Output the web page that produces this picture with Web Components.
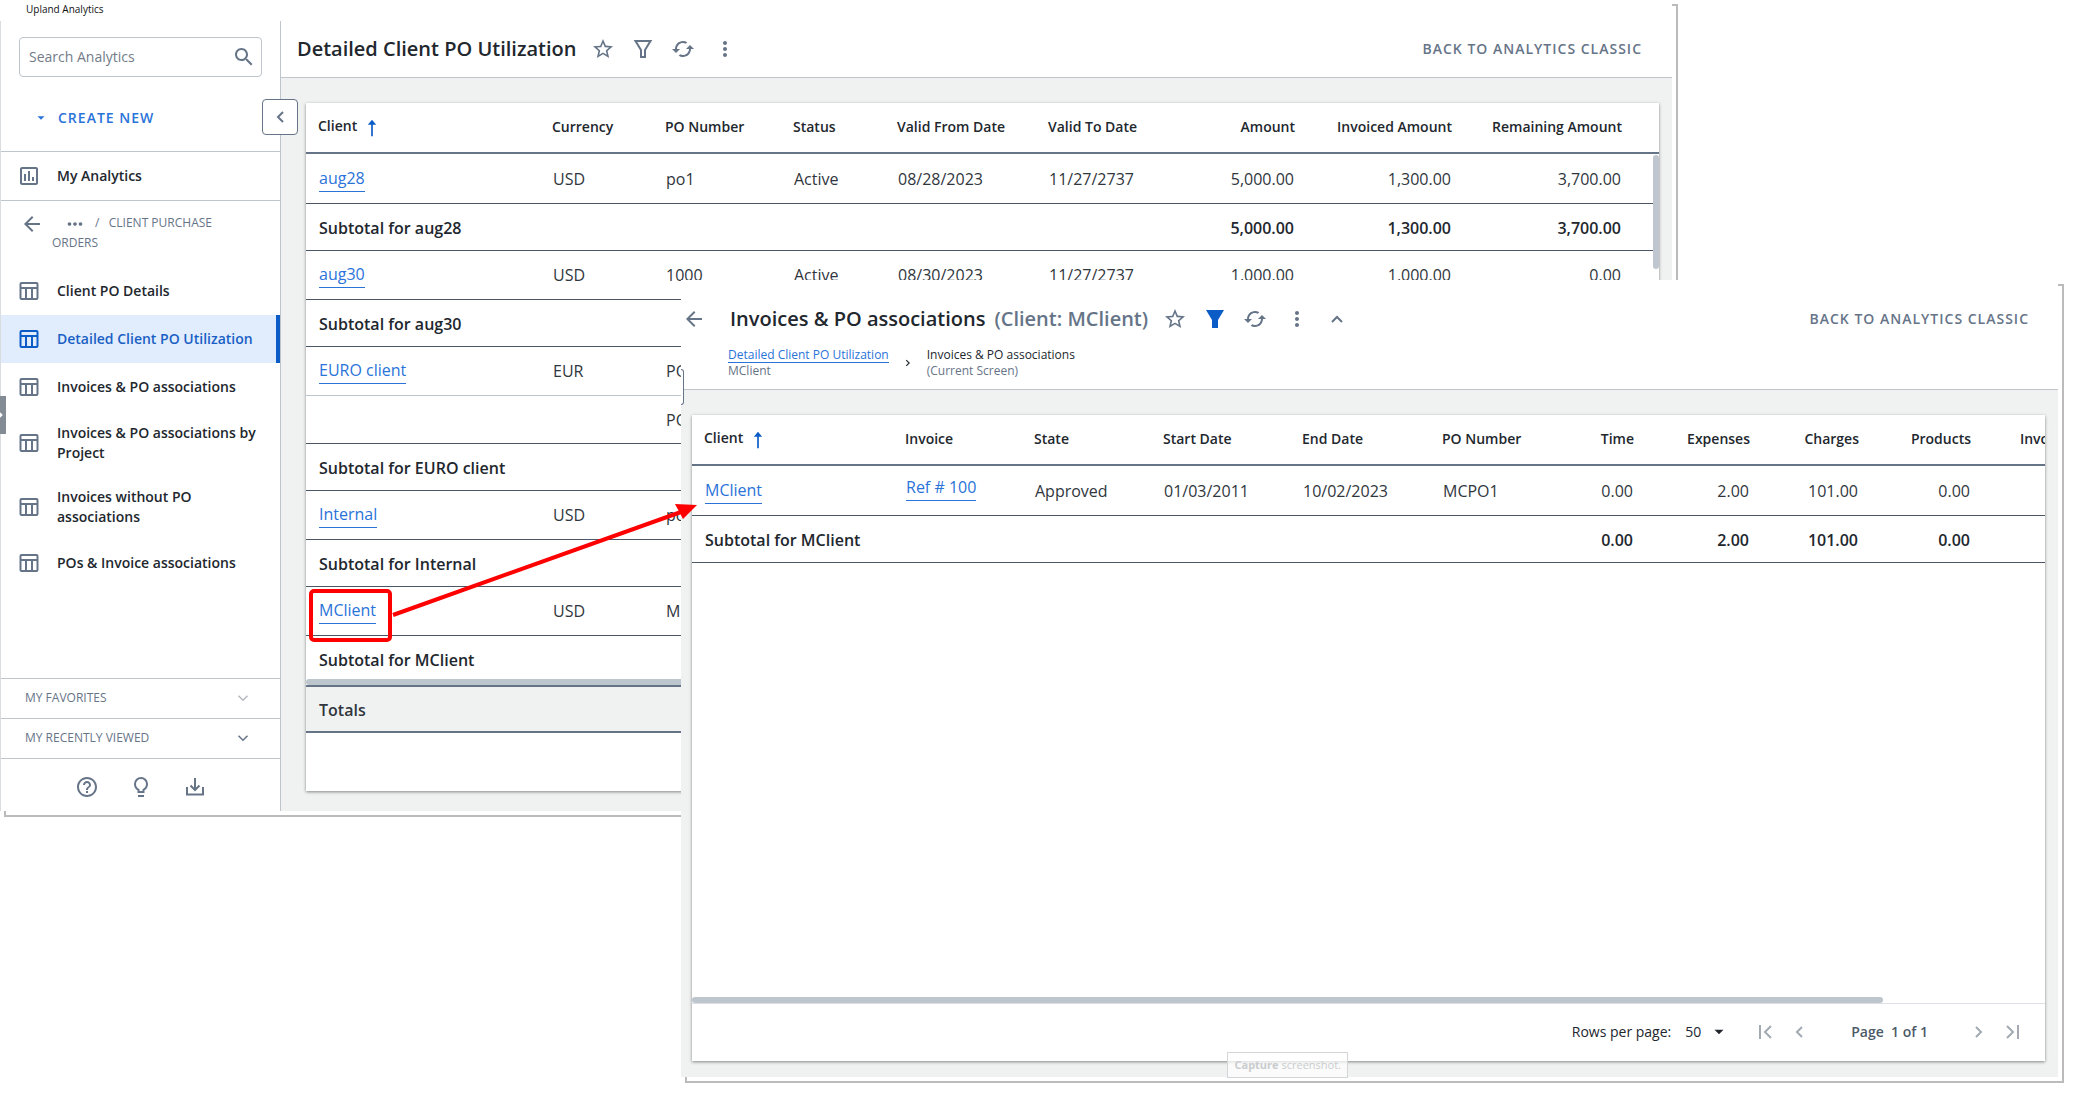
<!DOCTYPE html>
<html lang="en">
<head>
<meta charset="utf-8">
<title>Upland Analytics</title>
<style>
    html, body {
        margin: 0;
        height: 100%;
    }
    body {
        position: relative;
        min-height: 800px;
        overflow: hidden;
        background: #fff;
        color: #22272e;
        font-family: "Open Sans", sans-serif;
        font-size: 14px;
        line-height: 20px;
        --line: #bfc5cd;
        --slate: #667488;
        --blue: #2a73d9;
        --deep-blue: #0b5cc7;
        --canvas: #f0f2f2;
    }
    /* the two windows sit freely on the desktop */
    app-window {
        position: absolute;
    }
    .back {
        inset: 0 397px 277px 0;
    }
    .front {
        inset: 280px 11px 11px 681px;
    }
    .main {
        flex: 1;
        min-width: 0;
        display: flex;
        flex-direction: column;
    }
    callout-arrow {
        position: absolute;
        left: 309px;
        top: 500px;
    }
    hint-box {
        position: absolute;
        right: 727px;
        bottom: 16px;
    }
</style>
</head>
<body>
    <app-window class="back" caption="Upland Analytics">
        <side-nav>
            <nav-item icon="chart" slot="home">My Analytics</nav-item>
            <nav-item icon="table">Client PO Details</nav-item>
            <nav-item icon="table" active>Detailed Client PO Utilization</nav-item>
            <nav-item icon="table">Invoices &amp; PO associations</nav-item>
            <nav-item icon="table">Invoices &amp; PO associations by Project</nav-item>
            <nav-item icon="table">Invoices without PO associations</nav-item>
            <nav-item icon="table">POs &amp; Invoice associations</nav-item>
        </side-nav>
        <div class="main">
            <view-header icons="star,filter,refresh,more">Detailed Client PO Utilization</view-header>
            <data-grid view="utilization"></data-grid>
        </div>
    </app-window>

    <app-window class="front">
        <div class="main">
            <view-header back icons="star,filterFull,refresh,more,up">
                Invoices &amp; PO associations
                <span slot="sub">(Client: MClient)</span>
                <bread-crumbs slot="crumbs"></bread-crumbs>
            </view-header>
            <data-grid view="invoices" paged></data-grid>
        </div>
        <edge-handle slot="edge"></edge-handle>
    </app-window>

    <hint-box><b>Capture</b> screenshot.</hint-box>
    <callout-arrow></callout-arrow>

<script>
const ICONS = {
    star: '<path d="M22 9.24l-7.19-.62L12 2 9.19 8.63 2 9.24l5.46 4.73L5.82 21 12 17.27 18.18 21l-1.63-7.03L22 9.24zM12 15.4l-3.76 2.27 1-4.28-3.32-2.88 4.38-.38L12 6.1l1.71 4.04 4.38.38-3.32 2.88 1 4.28L12 15.4z"/>',
    filter: '<path d="M4.500 4h15L14 13v7h-4v-7z" fill="none" stroke="currentColor" stroke-width="2"/>',
    filterFull: '<path d="M3 3h18l-6 10v8H9v-8z"/>',
    refresh: '<path d="M19 8l-4 4h3c0 3.310-2.690 6-6 6-1.010 0-1.970-.25-2.800-.7l-1.460 1.460C8.970 19.540 10.430 20 12 20c4.420 0 8-3.580 8-8h3l-4-4zM6 12c0-3.310 2.690-6 6-6 1.010 0 1.970.25 2.800.7l1.460-1.460C15.030 4.460 13.570 4 12 4c-4.420 0-8 3.580-8 8H1l4 4 4-4H6z"/>',
    more: '<path d="M12 8c1.100 0 2-.9 2-2s-.9-2-2-2-2 .9-2 2 .9 2 2 2zm0 2c-1.100 0-2 .9-2 2s.9 2 2 2 2-.9 2-2-.9-2-2-2zm0 6c-1.100 0-2 .9-2 2s.9 2 2 2 2-.9 2-2-.9-2-2-2z"/>',
    dots: '<path d="M6 10c-1.100 0-2 .9-2 2s.9 2 2 2 2-.9 2-2-.9-2-2-2zm12 0c-1.100 0-2 .9-2 2s.9 2 2 2 2-.9 2-2-.9-2-2-2zm-6 0c-1.100 0-2 .9-2 2s.9 2 2 2 2-.9 2-2-.9-2-2-2z"/>',
    arrowLeft: '<path d="M20 11H7.830l5.590-5.590L12 4l-8 8 8 8 1.410-1.410L7.830 13H20v-2z"/>',
    search: '<path d="M15.500 14h-.79l-.28-.27C15.410 12.590 16 11.110 16 9.500 16 5.910 13.090 3 9.500 3S3 5.910 3 9.500 5.910 16 9.500 16c1.610 0 3.090-.59 4.230-1.570l.27.28v.79l5 4.990L20.490 19l-4.990-5zm-6 0C7.010 14 5 11.990 5 9.500S7.010 5 9.500 5 14 7.010 14 9.500 11.990 14 9.500 14z"/>',
    chart: '<path d="M9 17H7v-7h2v7zm4 0h-2V7h2v10zm4 0h-2v-4h2v4zm2 2H5V5h14v14zm0-16H5c-1.100 0-2 .9-2 2v14c0 1.100.9 2 2 2h14c1.100 0 2-.9 2-2V5c0-1.100-.9-2-2-2z"/>',
    table: '<g fill="none" stroke="currentColor" stroke-width="2"><rect x="3.500" y="4" width="17" height="16" rx="1"/><path d="M3 9h18M9 9v11M15 9v11"/></g>',
    help: '<path d="M11 18h2v-2h-2v2zm1-16C6.480 2 2 6.480 2 12s4.480 10 10 10 10-4.480 10-10S17.520 2 12 2zm0 18c-4.410 0-8-3.590-8-8s3.590-8 8-8 8 3.590 8 8-3.590 8-8 8zm0-14c-2.210 0-4 1.790-4 4h2c0-1.100.9-2 2-2s2 .9 2 2c0 2-3 1.750-3 5h2c0-2.250 3-2.500 3-5 0-2.210-1.790-4-4-4z"/>',
    bulb: '<path d="M9 20h6v2H9z"/><path d="M9.500 17v-2.200C7.300 13.600 6 11.500 6 9a6 6 0 0 1 12 0c0 2.500-1.300 4.600-3.500 5.800V17z" fill="none" stroke="currentColor" stroke-width="2"/>',
    download: '<path d="M12 3v12M7.500 10.500L12 15l4.500-4.500M4 12v7.500h16V12" fill="none" stroke="currentColor" stroke-width="2"/>',
    left: '<path d="M15 7l-5 5 5 5" fill="none" stroke="currentColor" stroke-width="2"/>',
    right: '<path d="M9 7l5 5-5 5" fill="none" stroke="currentColor" stroke-width="2"/>',
    first: '<path d="M18 6l-6 6 6 6M7 5v14" fill="none" stroke="currentColor" stroke-width="2"/>',
    last: '<path d="M6 6l6 6-6 6M17 5v14" fill="none" stroke="currentColor" stroke-width="2"/>',
    up: '<path d="M7 15l5-5 5 5" fill="none" stroke="currentColor" stroke-width="2"/>',
    down: '<path d="M6 9l6 6 6-6" fill="none" stroke="currentColor" stroke-width="2"/>',
    caret: '<path d="M6 9h12l-6 6z"/>',
    sort: '<path d="M12 2l5 6h-4v14h-2V8H7z"/>'
};

const svg = (name, size = 24) =>
    `<svg width="${size}" height="${size}" viewBox="0 0 24 24" fill="currentColor" aria-hidden="true">${ICONS[name]}</svg>`;

const RESET = `
    svg { display: block; flex: none; }
    button {
        display: flex;
        align-items: center;
        margin: 0;
        padding: 0;
        border: 0;
        background: none;
        color: inherit;
        font: inherit;
        cursor: pointer;
    }
`;

// link cells start with "@"
const VIEWS = {
    utilization: {
        columns: [
            ['Client', 234], ['Currency', 113], ['PO Number', 128], ['Status', 104],
            ['Valid From Date', 151], ['Valid To Date', 121], ['Amount', 150, 'num'],
            ['Invoiced Amount', 157, 'num'], ['Remaining Amount', 170, 'num'], ['']
        ],
        rows: [
            ['@aug28', 'USD', 'po1', 'Active', '08/28/2023', '11/27/2737', '5,000.00', '1,300.00', '3,700.00', ''],
            ['Subtotal for aug28', '', '', '', '', '', '5,000.00', '1,300.00', '3,700.00', ''],
            ['@aug30', 'USD', '1000', 'Active', '08/30/2023', '11/27/2737', '1,000.00', '1,000.00', '0.00', ''],
            ['Subtotal for aug30', '', '', '', '', '', '', '', '', ''],
            ['@EURO client', 'EUR', 'PO', '', '', '', '', '', '', ''],
            ['', '', 'PO', '', '', '', '', '', '', ''],
            ['Subtotal for EURO client', '', '', '', '', '', '', '', '', ''],
            ['@Internal', 'USD', 'po', '', '', '', '', '', '', ''],
            ['Subtotal for Internal', '', '', '', '', '', '', '', '', ''],
            ['@MClient', 'USD', 'M', '', '', '', '', '', '', ''],
            ['Subtotal for MClient', '', '', '', '', '', '', '', '', '']
        ],
        totals: true
    },
    invoices: {
        columns: [
            ['Client', 201], ['Invoice', 129], ['State', 129], ['Start Date', 139], ['End Date', 140],
            ['PO Number', 130], ['Time', 86, 'num'], ['Expenses', 116, 'num'], ['Charges', 109, 'num'],
            ['Products', 112, 'num'], ['Invoice', 97, 'num']
        ],
        rows: [
            ['@MClient', '@Ref # 100', 'Approved', '01/03/2011', '10/02/2023', 'MCPO1', '0.00', '2.00', '101.00', '0.00', ''],
            ['Subtotal for MClient', '', '', '', '', '', '0.00', '2.00', '101.00', '0.00', '']
        ]
    }
};

class AppWindow extends HTMLElement {
    constructor() {
        super();
        this.attachShadow({ mode: 'open' });
        const caption = this.getAttribute('caption');
        this.shadowRoot.innerHTML = `
            <style>
                :host { display: block; }
                /* drop edge, seen only past the sheet */
                .edge {
                    position: absolute;
                    inset: 4px 0 0 4px;
                    border: 2px solid #bbb;
                }
                .sheet {
                    position: absolute;
                    inset: 0 6px 6px 0;
                    display: flex;
                    flex-direction: column;
                    background: #fff;
                }
                .caption {
                    height: 21px;
                    padding-left: 26px;
                    font-size: 10px;
                    line-height: 19px;
                    color: #111;
                }
                .body {
                    flex: 1;
                    min-height: 0;
                    display: flex;
                }
            </style>
            <div class="edge"></div>
            <div class="sheet">
                ${caption ? `<div class="caption">${caption}</div>` : ''}
                <div class="body"><slot></slot></div>
            </div>
            <slot name="edge"></slot>
        `;
    }
}

class NavItem extends HTMLElement {
    constructor() {
        super();
        this.attachShadow({ mode: 'open' });
        this.shadowRoot.innerHTML = `
            <style>
                ${RESET}
                :host { display: block; }
                a {
                    display: flex;
                    align-items: center;
                    gap: 16px;
                    box-sizing: border-box;
                    min-height: 48px;
                    padding: 12px 16px;
                    color: #22272e;
                    font-weight: 600;
                    text-decoration: none;
                }
                svg { color: var(--slate); }
                :host([active]) a {
                    background: #e1edfd;
                    box-shadow: inset -4px 0 var(--deep-blue);
                    color: #1a5fc4;
                }
                :host([active]) svg { color: var(--deep-blue); }
            </style>
            <a href="#">${svg(this.getAttribute('icon'))}<span><slot></slot></span></a>
        `;
    }
}

class SideNav extends HTMLElement {
    constructor() {
        super();
        this.attachShadow({ mode: 'open' });
        this.shadowRoot.innerHTML = `
            <style>
                ${RESET}
                :host {
                    position: relative;
                    z-index: 1;
                    box-sizing: border-box;
                    width: 281px;
                    display: flex;
                    flex-direction: column;
                    border-left: 1px solid #dadddf;
                    border-right: 1px solid var(--line);
                    color: var(--slate);
                }
                .search {
                    display: flex;
                    align-items: center;
                    height: 38px;
                    margin: 16px 18px 0;
                    padding: 0 5px 0 9px;
                    border: 1px solid var(--line);
                    border-radius: 4px;
                }
                input {
                    flex: 1;
                    min-width: 0;
                    padding: 0;
                    border: 0;
                    outline: 0;
                    background: none;
                    font: inherit;
                }
                input::placeholder { color: #737c88; }
                .create {
                    height: 74px;
                    padding: 8px 0 0 33px;
                    gap: 10px;
                    color: var(--blue);
                    font-weight: 600;
                    letter-spacing: 1px;
                }
                .home {
                    border: solid var(--line);
                    border-width: 1px 0;
                }
                .crumb {
                    display: flex;
                    align-items: flex-start;
                    padding: 12px 16px 14px 19px;
                    font-size: 12px;
                }
                .crumb button { height: 22px; }
                .crumb p {
                    margin: 0 0 0 8px;
                    padding-right: 30px;
                }
                .crumb p svg {
                    display: inline-block;
                    vertical-align: top;
                    margin: 0 9px -2px 12px;
                }
                .items { flex: 1; }
                .fold {
                    justify-content: space-between;
                    width: 100%;
                    height: 40px;
                    padding: 0 28px 2px 24px;
                    border-top: 1px solid var(--line);
                    box-sizing: border-box;
                    font-size: 12px;
                }
                .fold.empty svg { color: #b4bac2; }
                .tools {
                    display: flex;
                    justify-content: center;
                    gap: 30px;
                    padding: 16px 0 12px;
                    border-top: 1px solid var(--line);
                }
                .collapse {
                    position: absolute;
                    top: 78px;
                    right: -18px;
                    justify-content: center;
                    width: 36px;
                    height: 36px;
                    box-sizing: border-box;
                    border: 1px solid var(--slate);
                    border-radius: 4px;
                    background: #fff;
                }
                .tab {
                    position: absolute;
                    left: -1px;
                    top: 375px;
                    width: 6px;
                    height: 38px;
                    overflow: hidden;
                    background: #838b94;
                }
                .tab::after {
                    content: "";
                    width: 4px;
                    height: 4px;
                    margin-left: -2px;
                    transform: rotate(45deg);
                    background: #fff;
                }
            </style>
            <div class="search">
                <input type="text" placeholder="Search Analytics" aria-label="Search Analytics">
                ${svg('search')}
            </div>
            <button class="create">${svg('caret', 14)}CREATE NEW</button>
            <div class="home"><slot name="home"></slot></div>
            <div class="crumb">
                <button aria-label="Back">${svg('arrowLeft')}</button>
                <p>${svg('dots', 22)}/&nbsp;&nbsp; CLIENT PURCHASE ORDERS</p>
            </div>
            <div class="items"><slot></slot></div>
            <button class="fold empty">MY FAVORITES ${svg('down', 18)}</button>
            <button class="fold">MY RECENTLY VIEWED ${svg('down', 18)}</button>
            <div class="tools">
                <button aria-label="Help">${svg('help')}</button>
                <button aria-label="Tips">${svg('bulb')}</button>
                <button aria-label="Download">${svg('download')}</button>
            </div>
            <button class="collapse" aria-label="Collapse menu">${svg('left')}</button>
            <button class="tab" aria-label="Open panel"></button>
        `;
    }
}

class ViewHeader extends HTMLElement {
    constructor() {
        super();
        this.attachShadow({ mode: 'open' });
        const icons = this.getAttribute('icons').split(',');
        const back = this.hasAttribute('back');
        this.shadowRoot.innerHTML = `
            <style>
                ${RESET}
                :host {
                    display: block;
                    border-bottom: 1px solid var(--line);
                    color: var(--slate);
                }
                .bar {
                    display: flex;
                    align-items: center;
                    height: 56px;
                    padding: 0 30px 0 16px;
                }
                :host([back]) .bar {
                    height: 52px;
                    padding: 13px 29px 0 1px;
                }
                h1 {
                    margin: 0;
                    color: #22272e;
                    font-size: 20px;
                    line-height: 28px;
                    font-weight: 600;
                    white-space: nowrap;
                }
                .back { margin-right: 24px; }
                ::slotted([slot="sub"]) {
                    margin-left: 9px;
                    font-size: 20px;
                    font-weight: 600;
                }
                .icons {
                    display: flex;
                    gap: 16px;
                    margin-left: 15px;
                }
                .more { margin-left: 2px; }
                .filterFull { color: var(--deep-blue); }
                .classic {
                    margin-left: auto;
                    color: var(--slate);
                    font-weight: 600;
                    letter-spacing: 1px;
                    text-decoration: none;
                    white-space: nowrap;
                }
            </style>
            <div class="bar">
                ${back ? `<button class="back" aria-label="Back">${svg('arrowLeft')}</button>` : ''}
                <h1><slot></slot></h1>
                <slot name="sub"></slot>
                <div class="icons">
                    ${icons.map(name => `<button class="${name}" aria-label="${name}">${svg(name)}</button>`).join('')}
                </div>
                <a class="classic" href="#">BACK TO ANALYTICS CLASSIC</a>
            </div>
            <slot name="crumbs"></slot>
        `;
    }
}

class BreadCrumbs extends HTMLElement {
    constructor() {
        super();
        this.attachShadow({ mode: 'open' });
        this.shadowRoot.innerHTML = `
            <style>
                ${RESET}
                :host {
                    display: flex;
                    align-items: center;
                    gap: 12px;
                    height: 36px;
                    padding: 0 0 8px 47px;
                    font-size: 12px;
                    line-height: 16px;
                }
                div {
                    display: flex;
                    flex-direction: column;
                    align-items: flex-start;
                }
                a {
                    line-height: 15px;
                    border-bottom: 1px solid var(--blue);
                    color: var(--blue);
                    text-decoration: none;
                }
                b { font-weight: 400; color: #22272e; }
                svg { color: #22272e; }
            </style>
            <div><a href="#">Detailed Client PO Utilization</a><span>MClient</span></div>
            ${svg('right', 14)}
            <div><b>Invoices &amp; PO associations</b><span>(Current Screen)</span></div>
        `;
    }
}

class DataGrid extends HTMLElement {
    constructor() {
        super();
        this.attachShadow({ mode: 'open' });
        this.render();
    }

    renderCell(text, column, i) {
        const body = text.startsWith('@') ? `<a href="#">${text.slice(1)}</a>` : text;
        return `<td class="${column[2] || ''} c${i}">${body}</td>`;
    }

    renderRow(row, columns) {
        const subtotal = row[0].startsWith('Subtotal');
        if (subtotal) {
            // the label runs over the text columns
            const span = columns.findIndex(c => c[2] === 'num');
            return `<tr class="subtotal"><td colspan="${span}">${row[0]}</td>${
                row.slice(span).map((t, i) => this.renderCell(t, columns[span + i], span + i)).join('')}</tr>`;
        }
        const kind = row[0] === '' ? 'more' : row[0] === '@EURO client' ? 'open' : '';
        return `<tr class="${kind}">${row.map((t, i) => this.renderCell(t, columns[i], i)).join('')}</tr>`;
    }

    render() {
        const { columns, rows, totals } = VIEWS[this.getAttribute('view')];
        const paged = this.hasAttribute('paged');
        this.shadowRoot.innerHTML = `
            <style>
                ${RESET}
                :host {
                    flex: 1;
                    min-height: 0;
                    display: flex;
                    padding: 25px 13px 20px 25px;
                    background: var(--canvas);
                }
                :host([paged]) { padding: 25px 13px 16px 11px; }
                .card {
                    flex: 1;
                    min-width: 0;
                    display: flex;
                    flex-direction: column;
                    background: #fff;
                    box-shadow: 0 1px 3px rgba(0, 0, 0, 0.45);
                }
                .scroll {
                    position: relative;
                    overflow: hidden;
                }
                :host([paged]) .scroll { flex: 1; }
                table {
                    table-layout: fixed;
                    width: 100%;
                    border-collapse: separate;
                    border-spacing: 0;
                }
                th, td {
                    box-sizing: border-box;
                    padding: 0 12px;
                    text-align: left;
                    white-space: nowrap;
                }
                th {
                    height: 51px;
                    padding-bottom: 1px;
                    border-bottom: 2px solid var(--slate);
                    font-weight: 600;
                }
                th svg {
                    display: inline-block;
                    vertical-align: middle;
                    margin-left: 5px;
                    color: var(--deep-blue);
                }
                td {
                    height: 49px;
                    padding: 0 13px;
                    border-bottom: 1px solid #4b5766;
                    font-size: 16px;
                    line-height: 24px;
                    color: #30363d;
                }
                .num { text-align: right; }
                tr:first-child td { height: 50px; }
                .open td { border-color: var(--line); }
                .more td { height: 48px; }
                .subtotal td {
                    height: 47px;
                    padding-top: 2px;
                    font-weight: 600;
                    color: #22272e;
                }
                a {
                    display: inline-block;
                    padding-bottom: 2px;
                    border-bottom: 1px solid var(--blue);
                    color: var(--blue);
                    line-height: 22px;
                    text-decoration: none;
                    vertical-align: middle;
                }
                .c1 a { margin-bottom: 4px; }
                :host([view="utilization"]) .subtotal:last-child td {
                    height: 43px;
                    padding-top: 4px;
                    border-bottom: 0;
                }
                .vbar {
                    position: absolute;
                    right: 0;
                    top: 51px;
                    width: 6px;
                    bottom: 0;
                    background: #fff;
                }
                .vbar::before {
                    content: "";
                    display: block;
                    height: 114px;
                    margin-top: 1px;
                    border-radius: 3px;
                    background: #bfc6cf;
                }
                .hbar {
                    height: 6px;
                    border-radius: 3px;
                    background: #bdc5cd;
                }
                :host([paged]) .hbar { width: 88%; }
                .totals tr td {
                    height: 48px;
                    padding-top: 2px;
                    border: solid var(--slate);
                    border-width: 2px 0;
                    background: #f0f2f2;
                    font-weight: 600;
                }
                .pager {
                    display: flex;
                    align-items: center;
                    justify-content: flex-end;
                    height: 55px;
                    padding: 0 20px 2px 0;
                    border-top: 1px solid #dcdfe3;
                }
                .rows {
                    display: flex;
                    align-items: center;
                    margin-right: 25px;
                }
                select {
                    margin: 0 0 0 14px;
                    padding: 0 3px 0 0;
                    appearance: none;
                    border: 0;
                    background: none;
                    color: inherit;
                    font: inherit;
                }
                .rows svg { margin-left: 5px; }
                .pager button { color: #a3aab3; }
                .pager span {
                    margin: 0 39px 0 40px;
                    color: #4d5a68;
                    font-weight: 600;
                    white-space: pre;
                }
                .gap { margin-left: 10px; }
            </style>
            <div class="card">
                <div class="scroll">
                    <table>
                        <colgroup>${columns.map(c => `<col${c[1] ? ` style="width:${c[1]}px"` : ''}>`).join('')}</colgroup>
                        <thead><tr>${columns.map((c, i) =>
                            `<th class="${c[2] || ''}">${c[0]}${i === 0 ? svg('sort', 20) : ''}</th>`).join('')}</tr></thead>
                        <tbody>${rows.map(row => this.renderRow(row, columns)).join('')}</tbody>
                    </table>
                    ${paged ? '' : '<div class="vbar"></div>'}
                </div>
                <div class="hbar"></div>
                ${totals ? '<table class="totals"><tr><td>Totals</td></tr></table>' : ''}
                ${paged ? `
                <div class="pager">
                    <div class="rows">
                        <label for="size">Rows per page:</label>
                        <select id="size"><option>50</option></select>
                        ${svg('caret', 18)}
                    </div>
                    <button aria-label="First page">${svg('first')}</button>
                    <button class="gap" aria-label="Previous page">${svg('left')}</button>
                    <span>Page  1 of 1</span>
                    <button aria-label="Next page">${svg('right')}</button>
                    <button class="gap" aria-label="Last page">${svg('last')}</button>
                </div>` : ''}
            </div>
        `;
    }
}

class EdgeHandle extends HTMLElement {
    constructor() {
        super();
        this.attachShadow({ mode: 'open' });
        this.shadowRoot.innerHTML = `
            <style>
                :host {
                    position: absolute;
                    left: 0;
                    top: 89px;
                    width: 2px;
                    height: 34px;
                    border: solid var(--slate);
                    border-width: 1px 1px 1px 0;
                    border-radius: 0 4px 4px 0;
                    background: #fff;
                }
            </style>
        `;
    }
}

class HintBox extends HTMLElement {
    constructor() {
        super();
        this.attachShadow({ mode: 'open' });
        this.shadowRoot.innerHTML = `
            <style>
                :host {
                    display: block;
                    padding: 2px 6px;
                    border: 1px solid #d3d6d9;
                    background: rgba(255, 255, 255, 0.7);
                    color: #c9ccce;
                    font-size: 11px;
                }
            </style>
            <slot></slot>
        `;
    }
}

// red frame round the client link, with an arrow to the drilled-down view
class CalloutArrow extends HTMLElement {
    constructor() {
        super();
        this.attachShadow({ mode: 'open' });
        this.shadowRoot.innerHTML = `
            <style>
                :host { display: block; pointer-events: none; }
                svg { display: block; }
            </style>
            <svg width="390" height="144" viewBox="0 0 390 144" aria-hidden="true">
                <rect x="2" y="91" width="79" height="49" rx="3" fill="none" stroke="#f00" stroke-width="4"/>
                <path d="M84 115L372 12" stroke="#f00" stroke-width="4"/>
                <path d="M388 5L366 4L374 19Z" fill="#f00"/>
            </svg>
        `;
    }
}

customElements.define('app-window', AppWindow);
customElements.define('nav-item', NavItem);
customElements.define('side-nav', SideNav);
customElements.define('view-header', ViewHeader);
customElements.define('bread-crumbs', BreadCrumbs);
customElements.define('data-grid', DataGrid);
customElements.define('edge-handle', EdgeHandle);
customElements.define('hint-box', HintBox);
customElements.define('callout-arrow', CalloutArrow);
</script>
</body>
</html>
